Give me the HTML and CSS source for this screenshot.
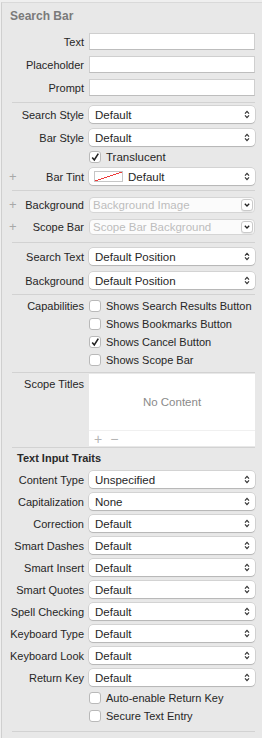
FILE: index.html
```html
<!DOCTYPE html>
<html lang="en">
<head>
    <meta charset="UTF-8">
    <title>Search Bar Inspector</title>
    <link rel="stylesheet" href="styles.css">
</head>
<body>
    <div class="panel">
        <div class="section-title">Search Bar</div>

        <div class="group fields">
            <div class="row"><span class="label">Text</span><input class="field" type="text"></div>
            <div class="row"><span class="label">Placeholder</span><input class="field" type="text"></div>
            <div class="row"><span class="label">Prompt</span><input class="field" type="text"></div>
        </div>

        <hr class="sep sep-a">

        <div class="group">
            <div class="row"><span class="label">Search Style</span><div class="popup">Default</div></div>
            <div class="row row-b"><span class="label">Bar Style</span><div class="popup">Default</div></div>
            <div class="row check-row row-c"><span class="label"></span><span class="check on"></span>Translucent</div>
            <div class="row row-c">
                <span class="label"><span class="plus">+</span>Bar Tint</span>
                <div class="popup"><span class="swatch"></span>Default</div>
            </div>
        </div>

        <hr class="sep sep-b">

        <div class="group combos">
            <div class="row combo-row">
                <span class="label"><span class="plus">+</span>Background</span>
                <div class="combo">Background Image<span class="combo-btn"></span></div>
            </div>
            <div class="row combo-row">
                <span class="label"><span class="plus">+</span>Scope Bar</span>
                <div class="combo">Scope Bar Background<span class="combo-btn"></span></div>
            </div>
        </div>

        <hr class="sep sep-c">

        <div class="group positions">
            <div class="row"><span class="label">Search Text</span><div class="popup">Default Position</div></div>
            <div class="row"><span class="label">Background</span><div class="popup">Default Position</div></div>
        </div>

        <hr class="sep sep-d">

        <div class="checks">
            <div class="row check-row"><span class="label">Capabilities</span><span class="check"></span>Shows Search Results Button</div>
            <div class="row check-row"><span class="label"></span><span class="check"></span>Shows Bookmarks Button</div>
            <div class="row check-row"><span class="label"></span><span class="check on"></span>Shows Cancel Button</div>
            <div class="row check-row"><span class="label"></span><span class="check"></span>Shows Scope Bar</div>
        </div>

        <hr class="sep sep-e">

        <div class="row table-row">
            <span class="label">Scope Titles</span>
            <div class="table">
                <div class="table-body">No Content</div>
                <div class="table-foot"><span>+</span><span>&minus;</span></div>
            </div>
        </div>

        <hr class="sep sep-f">

        <div class="sub-title">Text Input Traits</div>

        <div class="group traits">
            <div class="row"><span class="label">Content Type</span><div class="popup">Unspecified</div></div>
            <div class="row"><span class="label">Capitalization</span><div class="popup">None</div></div>
            <div class="row"><span class="label">Correction</span><div class="popup">Default</div></div>
            <div class="row"><span class="label">Smart Dashes</span><div class="popup">Default</div></div>
            <div class="row"><span class="label">Smart Insert</span><div class="popup">Default</div></div>
            <div class="row"><span class="label">Smart Quotes</span><div class="popup">Default</div></div>
            <div class="row"><span class="label">Spell Checking</span><div class="popup">Default</div></div>
            <div class="row"><span class="label">Keyboard Type</span><div class="popup">Default</div></div>
            <div class="row"><span class="label">Keyboard Look</span><div class="popup">Default</div></div>
            <div class="row"><span class="label">Return Key</span><div class="popup">Default</div></div>
        </div>

        <div class="checks checks-end">
            <div class="row check-row"><span class="label"></span><span class="check"></span>Auto-enable Return Key</div>
            <div class="row check-row"><span class="label"></span><span class="check"></span>Secure Text Entry</div>
        </div>

        <hr class="sep sep-g">
    </div>
</body>
</html>
```

FILE: styles.css
```css
:root {
    --panel-bg: #e8e8e8;
    --line: #d2d2d2;
    --text: #262626;
    --muted: #7a7a7a;
    --placeholder: #bdbdbd;
}

* {
    margin: 0;
    padding: 0;
    box-sizing: border-box;
}

body {
    font-family: 'Liberation Sans', Arial, sans-serif;
    font-size: 11px;
    color: var(--text);
    background: #efefef;
}

.panel {
    margin: 2px 0 0 1px;
    min-height: 736px;
    background: var(--panel-bg);
    border-top: 1px solid #d9d9d9;
    border-left: 1px solid #cfcfcf;
    padding: 0 7px 0 8px;
}

.section-title {
    font-size: 12px;
    font-weight: bold;
    color: var(--muted);
    line-height: 15px;
    padding-top: 6px;
}

.sub-title {
    font-weight: bold;
    line-height: 14px;
    margin: 3px 0 0 7px;
    color: #2a2a2a;
}

.group {
    display: flex;
    flex-direction: column;
}

.row {
    display: flex;
    align-items: center;
    height: 17px;
    white-space: nowrap;
}

.label {
    flex: 0 0 79px;
    display: flex;
    justify-content: flex-end;
    padding-right: 5px;
}

.plus {
    margin: 0 auto 0 -1px;
    color: #a8a8a8;
    font-size: 13px;
    line-height: 11px;
}

/* text fields */
.fields {
    margin-top: 9px;
    gap: 6px;
}

.field {
    flex: 1;
    width: 0;
    min-width: 0;
    height: 17px;
    border: 1px solid #cfcfcf;
    border-bottom-color: #bdbdbd;
    background: #fff;
    outline: none;
}

/* pop-up buttons */
.popup {
    flex: 1;
    height: 17px;
    display: flex;
    align-items: center;
    padding-left: 6px;
    background: #fff;
    border-radius: 4px;
    box-shadow: 0 0 0 0.5px rgba(0,0,0,0.18), 0 1px 1px rgba(0,0,0,0.14);
    position: relative;
    font-size: 11.5px;
}

.popup::after {
    content: '';
    position: absolute;
    right: 5px;
    top: 4px;
    width: 6px;
    height: 9px;
    background: url("data:image/svg+xml,%3Csvg xmlns='http://www.w3.org/2000/svg' width='6' height='9'%3E%3Cpath d='M1 3.6L3 1.4L5 3.6M1 5.4L3 7.6L5 5.4' fill='none' stroke='%23333' stroke-width='1.2'/%3E%3C/svg%3E") no-repeat;
}

.swatch {
    width: 29px;
    height: 11px;
    margin: 0 5px 0 -1px;
    border: 1px solid #c6c6c6;
    background: #fff linear-gradient(to bottom right, transparent calc(50% - 0.6px), #ee3b3b calc(50% - 0.6px), #ee3b3b calc(50% + 0.6px), transparent calc(50% + 0.6px));
}

.row-b {
    margin-top: 6px;
}

.row-c {
    margin-top: 5px;
}

/* combo boxes */
.combos {
    gap: 6px;
}

.combo-row {
    height: 16px;
}

.combo {
    flex: 1;
    height: 16px;
    display: flex;
    align-items: center;
    padding-left: 3px;
    color: var(--placeholder);
    background: #fbfbfb;
    border: 1px solid #d5d5d5;
    border-radius: 4px;
    position: relative;
    font-size: 11.5px;
}

.combo-btn {
    position: absolute;
    right: 1px;
    top: 1px;
    width: 12px;
    height: 12px;
    background: #fff;
    border: 1px solid #cacaca;
    border-radius: 3px;
    box-shadow: 0 1px 0 rgba(0,0,0,0.08);
}

.combo-btn::after {
    content: '';
    position: absolute;
    left: 2px;
    top: 3px;
    width: 6px;
    height: 4px;
    background: url("data:image/svg+xml,%3Csvg xmlns='http://www.w3.org/2000/svg' width='6' height='4'%3E%3Cpath d='M0.8 0.8L3 3L5.2 0.8' fill='none' stroke='%23222' stroke-width='1.3'/%3E%3C/svg%3E") no-repeat;
}

.positions {
    gap: 7px;
}

/* check boxes */
.check-row {
    height: 12px;
    font-size: 11.5px;
}

.checks .check-row {
    height: 18px;
    font-size: 11px;
}

.check {
    flex: 0 0 12px;
    height: 12px;
    margin-right: 5px;
    background: #fff;
    border: 1px solid #b9b9b9;
    border-radius: 3px;
    position: relative;
}

.check.on::after {
    content: '';
    position: absolute;
    left: 0;
    top: 0;
    width: 10px;
    height: 10px;
    background: url("data:image/svg+xml,%3Csvg xmlns='http://www.w3.org/2000/svg' width='10' height='10'%3E%3Cpath d='M2.2 5.4L4.3 7.9L8.3 1.6' fill='none' stroke='%23222' stroke-width='1.6'/%3E%3C/svg%3E") no-repeat;
}

.checks {
    margin-top: 2px;
}

.checks-end {
    margin-top: 3px;
}

/* scope titles table */
.table-row {
    height: 72px;
    align-items: flex-start;
    margin-top: 1px;
}

.table-row .label {
    padding-top: 4px;
}

.table {
    flex: 1;
    height: 72px;
    background: #fff;
    display: flex;
    flex-direction: column;
}

.table-body {
    flex: 1;
    display: flex;
    align-items: center;
    justify-content: center;
    color: #8a8a8a;
    font-size: 11.5px;
}

.table-foot {
    height: 16px;
    border-top: 1px solid #f0f0f0;
    display: flex;
    align-items: center;
    gap: 8px;
    padding-left: 5px;
    color: #b4b4b4;
    font-size: 14px;
}

.traits {
    margin-top: 6px;
    gap: 5px;
}

/* separators */
.sep {
    border: none;
    border-top: 1px solid var(--line);
    margin-left: 2px;
}

.sep-a { margin-top: 6px; margin-bottom: 3px; }
.sep-b { margin-top: 5px; margin-bottom: 6px; }
.sep-c { margin-top: 7px; margin-bottom: 5px; }
.sep-d { margin-top: 5px; }
.sep-e { margin-top: 3px; }
.sep-f { margin-top: 1px; }
.sep-g { margin-top: 6px; }
```
